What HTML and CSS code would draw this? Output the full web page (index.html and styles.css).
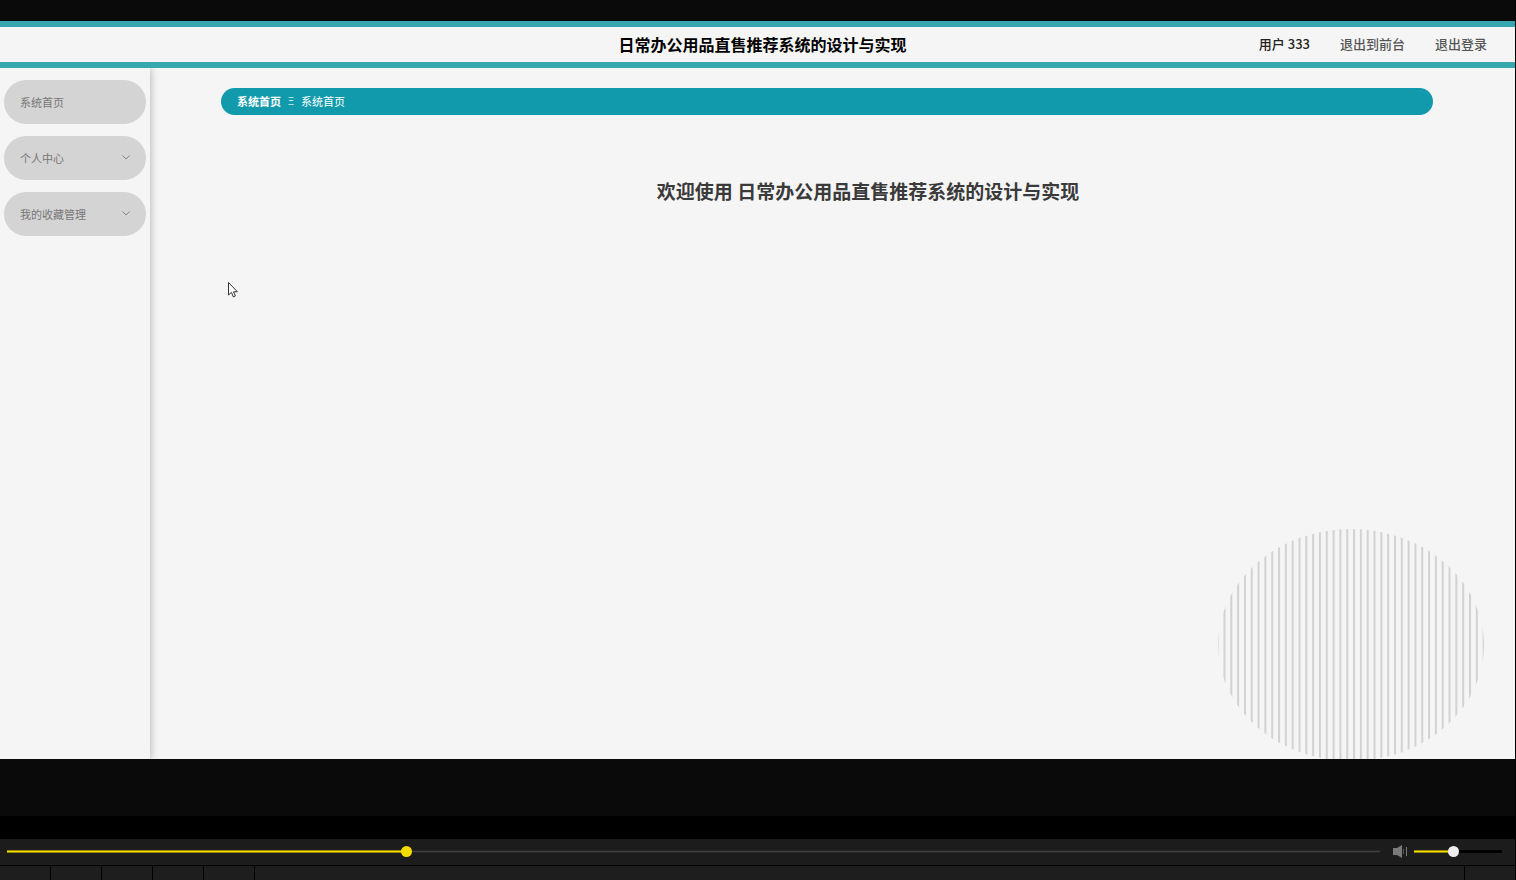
FILE: index.html
```html
<!DOCTYPE html>
<html lang="zh-CN">
    <head>
        <meta charset="utf-8">
        <title>日常办公用品直售推荐系统的设计与实现</title>
        <link rel="stylesheet" href="styles.css">
    </head>
    <body>
        <div class="screen">
            <header class="top">
                <h1>日常办公用品直售推荐系统的设计与实现</h1>
                <nav class="user-nav">
                    <span class="user">用户 333</span>
                    <a href="#">退出到前台</a>
                    <a href="#">退出登录</a>
                </nav>
            </header>

            <div class="main">
                <!-- 左侧菜单 -->
                <ul class="menu">
                    <li><a class="menu-item" href="#">系统首页</a></li>
                    <li>
                        <button class="menu-item" type="button">个人中心
                            <svg class="arrow" viewBox="0 0 8 7"><path d="M0.5 0.5 L4 4 L7.5 0.5"/></svg>
                        </button>
                    </li>
                    <li>
                        <button class="menu-item" type="button">我的收藏管理
                            <svg class="arrow" viewBox="0 0 8 7"><path d="M0.5 0.5 L4 4 L7.5 0.5"/></svg>
                        </button>
                    </li>
                </ul>

                <!-- 右侧内容 -->
                <main class="content">
                    <div class="breadcrumb">
                        <b>系统首页</b>
                        <span class="sep">Ξ</span>
                        <span>系统首页</span>
                    </div>
                    <h2>欢迎使用 日常办公用品直售推荐系统的设计与实现</h2>
                    <svg class="stripes" viewBox="0 0 390 230" preserveAspectRatio="none">
                        <defs>
                            <pattern id="bars" x="-2" width="10" height="230" patternUnits="userSpaceOnUse">
                                <rect width="3" height="230" fill="#d2d2d2"/>
                            </pattern>
                        </defs>
                        <ellipse cx="195" cy="116" rx="195" ry="116" fill="url(#bars)"/>
                    </svg>
                </main>
            </div>

            <!-- 鼠标指针 -->
            <svg class="cursor" viewBox="0 0 10 16">
                <path d="M0.5 0.5 V13 L3.4 10.4 L5.4 15 L7.4 14 L5.5 9.8 H9.4 Z"/>
            </svg>
        </div>

        <div class="gap"></div>

        <!-- 播放器 -->
        <div class="player">
            <input class="seek" type="range" min="0" max="1000" value="289" aria-label="播放进度">
            <button class="mute" type="button" aria-label="静音">
                <svg viewBox="0 0 14 13">
                    <path d="M0 3 H4 L9 0 V13 L4 10 H0 Z" fill="#7a7a7a"/>
                    <path d="M10.5 4 V9" stroke="#555"/>
                    <path d="M13.5 2 V11" stroke="#777"/>
                </svg>
            </button>
            <input class="volume" type="range" min="0" max="100" value="44" aria-label="音量">
        </div>
        <div class="toolbar">
            <span></span>
            <span></span>
            <span></span>
            <span></span>
            <span></span>
            <span class="last"></span>
        </div>
    </body>
</html>
```

FILE: styles.css
```css
*{
    margin: 0;
    padding: 0;
    box-sizing: border-box;
}
body{
    height: 100vh;
    display: flex;
    flex-direction: column;
    overflow: hidden;
    background-color: #000;
    font-family: "Noto Sans CJK SC", "Open Sans", sans-serif;
}
a{
    color: inherit;
    text-decoration: none;
}
button{
    border: none;
    background: none;
    font-family: inherit;
    cursor: pointer;
}

/*视频画面*/
.screen{
    position: relative;
    flex: 1;
    display: flex;
    flex-direction: column;
    margin-right: 1px;
    background-color: #f5f5f5;
    border-top: 21px solid #0a0a0a;
    border-bottom: 57px solid #0a0a0a;
}

/*顶部*/
.top{
    height: 47px;
    padding: 0 28px 2px 38px;
    border-top: 6px solid #37a8af;
    border-bottom: 6px solid #37a8af;
    display: grid;
    grid-template-columns: 1fr auto 1fr;
    align-items: center;
}
.top h1{
    grid-column: 2;
    font-size: 16px;
    line-height: 24px;
    color: #000;
}
.user-nav{
    display: flex;
    justify-content: flex-end;
    gap: 30px;
    font-size: 13px;
    line-height: 20px;
    font-weight: 500;
    color: #555;
}
.user{
    color: #222;
}

/*菜单和内容*/
.main{
    flex: 1;
    display: flex;
}
.menu{
    width: 150px;
    padding: 12px 4px;
    list-style: none;
    display: flex;
    flex-direction: column;
    gap: 12px;
    box-shadow: 0 0 8px rgba(0, 0, 0, 0.3);
    clip-path: inset(0 -10px 0 0);
}
.menu-item{
    width: 100%;
    height: 44px;
    padding: 0 16px;
    border-radius: 22px;
    background-color: #d4d4d4;
    color: #777;
    font-size: 11px;
    line-height: 16px;
    display: flex;
    justify-content: space-between;
    align-items: center;
}
.arrow{
    width: 8px;
    height: 7px;
    fill: none;
    stroke: #888;
}
.content{
    flex: 1;
    padding: 20px 0 0 71px;
    display: flex;
    flex-direction: column;
}
.breadcrumb{
    height: 27px;
    margin-right: 82px;
    padding: 0 16px 2px;
    border-radius: 14px;
    background-color: #119aac;
    color: #fff;
    font-size: 11px;
    line-height: 16px;
    display: flex;
    align-items: center;
    gap: 7px;
}
.sep{
    font-family: "Open Sans", sans-serif;
    opacity: 0.8;
}
.content h2{
    margin-top: 62px;
    font-size: 19px;
    line-height: 28px;
    text-align: center;
    color: #3a3a3a;
}
.stripes{
    width: 266px;
    height: 230px;
    margin: auto 31px 0 auto;
}
.cursor{
    position: absolute;
    left: 228px;
    top: 261px;
    width: 10px;
    height: 16px;
    fill: #fff;
    stroke: #333;
}

/*播放器*/
.gap{
    height: 23px;
}
.player{
    height: 26px;
    margin-right: 1px;
    padding: 0 13px 2px 7px;
    background-color: #1c1c1c;
    display: flex;
    align-items: center;
}
input[type="range"]{
    -webkit-appearance: none;
    appearance: none;
    height: 11px;
    background: none;
}
input[type="range"]::-webkit-slider-runnable-track{
    height: 3px;
}
input[type="range"]::-webkit-slider-thumb{
    -webkit-appearance: none;
    width: 11px;
    height: 11px;
    margin-top: -4px;
    border-radius: 50%;
}
.seek{
    flex: 1;
}
.seek::-webkit-slider-runnable-track{
    background: linear-gradient(#f5dc00, #f5dc00) 0 1px / 29% 1px no-repeat,
                linear-gradient(#9a8a00, #9a8a00) 0 0 / 29% 3px no-repeat,
                linear-gradient(#404040, #404040) 0 1px / 100% 1px no-repeat,
                #262626;
}
.seek::-webkit-slider-thumb{
    background-color: #f5dc00;
}
.mute{
    width: 14px;
    height: 13px;
    margin: 0 7px 0 13px;
}
.mute svg{
    display: block;
    width: 14px;
    height: 13px;
}
.volume{
    width: 88px;
}
.volume::-webkit-slider-runnable-track{
    background: linear-gradient(#f5dc00, #f5dc00) 0 1px / 44% 1px no-repeat,
                linear-gradient(#9a8a00, #9a8a00) 0 0 / 44% 3px no-repeat,
                #000;
}
.volume::-webkit-slider-thumb{
    background-color: #eee;
}

/*底部按钮栏*/
.toolbar{
    height: 15px;
    margin-right: 1px;
    border-top: 1px solid #000;
    background-color: #1e1e1e;
    display: flex;
}
.toolbar span{
    width: 51px;
    border-right: 1px solid #000;
}
.toolbar .last{
    margin-left: auto;
    border-right: none;
    border-left: 1px solid #000;
}
```
